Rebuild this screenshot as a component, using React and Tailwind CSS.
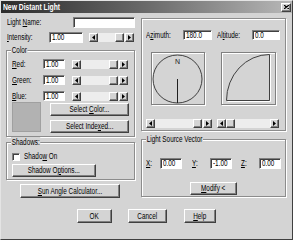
import React from 'react';

// narrow text: the dialog in the shot is squeezed sideways, so letters are tall and thin
const T = ({ children, center }) => (
    <span className={center ? 'inline-block whitespace-nowrap origin-center scale-x-[0.75]' : 'inline-block whitespace-nowrap origin-left scale-x-[0.75]'}>
        {children}
    </span>
);

const raised = 'bg-[#d4d4d4] border border-t-white border-l-white border-r-[#404040] border-b-[#404040] shadow-[inset_-1px_-1px_0_#808080]';

const Btn = ({ children, className = '' }) => (
    <div className={`flex items-center justify-center leading-none ${raised} ${className}`}>
        <T center>{children}</T>
    </div>
);

const Field = ({ value, className = '' }) => (
    <div className={`flex items-center leading-none pl-[2px] bg-white border border-t-[#808080] border-l-[#808080] border-r-white border-b-white shadow-[inset_1px_1px_0_#404040] ${className}`}>
        <T>{value}</T>
    </div>
);

const Arrow = ({ dir }) => (
    <div className={`w-[9px] h-full flex items-center justify-center ${raised}`}>
        <svg width="3" height="5" viewBox="0 0 3 5">
            <polygon points={dir === 'l' ? '3,0 0,2.5 3,5' : '0,0 3,2.5 0,5'} fill="#000" />
        </svg>
    </div>
);

const Slider = ({ className = '', thumb = 'end' }) => (
    <div className={`flex h-[9px] ${className}`}>
        <Arrow dir="l" />
        <div className="flex-1 flex bg-[#ededed]">
            {thumb === 'end' && <div className="flex-1" />}
            <div className={`w-[9px] h-full ${raised}`} />
            {thumb === 'start' && <div className="flex-1" />}
            {thumb === 'end' && <div className="w-[1px]" />}
        </div>
        <Arrow dir="r" />
    </div>
);

const Group = ({ label, className = '', children }) => (
    <div className={`relative border border-[#8c8c8c] shadow-[inset_1px_1px_0_#fff,1px_1px_0_#fff] ${className}`}>
        {label && (
            <div className="absolute -top-[6px] left-[4px] px-[1px] bg-[#d4d4d4] leading-[11px] whitespace-nowrap origin-left scale-x-[0.75]">
                {label}
            </div>
        )}
        {children}
    </div>
);

const ColorRow = ({ label, first }) => (
    <div className={`flex items-center h-[10px] pl-[5px] ${first ? '' : 'mt-[6px]'}`}>
        <div className="w-[31px] leading-none"><T>{label}</T></div>
        <Field value="1.00" className="w-[22px] h-[10px]" />
        <Slider className="ml-[7px] w-[56px]" />
    </div>
);

const Compass = () => (
    <div className="w-[54px] h-[53px] border border-[#808080] shadow-[1px_1px_0_#fff,inset_1px_1px_0_#fff]">
        <svg width="52" height="51" viewBox="0 0 52 51">
            <ellipse cx="25.5" cy="26" rx="24.5" ry="24" fill="none" stroke="#404040" strokeWidth="1" />
            <text x="25.5" y="11" textAnchor="middle" fontSize="7" fontFamily="Liberation Sans, Arial, sans-serif" fill="#202020">N</text>
            <line x1="25.5" y1="26" x2="25.5" y2="50" stroke="#202020" strokeWidth="1" />
        </svg>
    </div>
);

const AltitudeBox = () => (
    <div className="w-[55px] h-[53px] border border-[#808080] shadow-[1px_1px_0_#fff,inset_1px_1px_0_#fff]">
        <svg width="53" height="51" viewBox="0 0 53 51">
            <path d="M4.5 47.5 A43 46 0 0 1 47.5 1.5 L47.5 47.5 Z" fill="none" stroke="#404040" strokeWidth="1" />
            <path d="M5.5 48.5 L48.5 48.5 L48.5 2" fill="none" stroke="#ffffff" strokeWidth="1" />
        </svg>
    </div>
);

export default function App() {
    return (
        <div className="w-[293px] h-[240px] flex flex-col bg-[#d4d4d4] text-black text-[8.5px] font-['Liberation_Sans',Arial,sans-serif] border border-t-[#e4e4e4] border-l-[#e4e4e4] border-r-[#404040] border-b-[#404040] overflow-hidden">
            {/* title bar */}
            <div className="h-[12px] flex items-center bg-linear-to-r from-[#2c2c2c] via-[#6a6a6a] to-[#b8b8b8] pl-[2px] pr-[1px]">
                <div className="flex-1 text-white font-bold text-[9px] leading-none"><T>New Distant Light</T></div>
                <div className={`w-[10px] h-[9px] flex items-center justify-center ${raised}`}>
                    <svg width="5" height="4" viewBox="0 0 5 4">
                        <path d="M0 0 L5 4 M5 0 L0 4" stroke="#000" strokeWidth="1.2" />
                    </svg>
                </div>
            </div>

            <div className="flex pl-[5px]">
                {/* left column */}
                <div className="w-[129px] flex flex-col">
                    <div className="mt-[4px] h-[11px] flex items-center">
                        <div className="w-[68px] pl-[1px] leading-none"><T>Light <u>N</u>ame:</T></div>
                        <Field value="" className="w-[62px] h-[11px]" />
                    </div>
                    <div className="mt-[4px] h-[11px] flex items-center">
                        <div className="w-[43px] pl-[1px] leading-none"><T><u>I</u>ntensity:</T></div>
                        <Field value="1.00" className="w-[34px] h-[11px]" />
                        <Slider className="ml-[6px] w-[45px]" />
                    </div>

                    <Group label="Color" className="mt-[7px] h-[87px] pt-[8px]">
                        <ColorRow first label={<><u>R</u>ed:</>} />
                        <ColorRow label={<><u>G</u>reen:</>} />
                        <ColorRow label={<><u>B</u>lue:</>} />
                        <div className="flex mt-[1px] pl-[5px]">
                            <div className="w-[29px] h-[30px] bg-[#b2b2b2] border border-[#a0a0a0]" />
                            <div className="ml-[9px] w-[79px] flex flex-col">
                                <Btn className="mt-[1px] h-[13px]">Select <u>C</u>olor...</Btn>
                                <Btn className="mt-[4px] h-[13px]">Select Inde<u>x</u>ed...</Btn>
                            </div>
                        </div>
                    </Group>

                    <Group label="Shadows:" className="mt-[5px] h-[38px] pt-[9px]">
                        <div className="flex items-center h-[9px] pl-[5px]">
                            <div className="w-[8px] h-[8px] bg-white border border-t-[#808080] border-l-[#808080] border-r-white border-b-white shadow-[inset_1px_1px_0_#404040]" />
                            <div className="ml-[4px] leading-none"><T>Shado<u>w</u> On</T></div>
                        </div>
                        <div className="pl-[5px] mt-[3px]">
                            <Btn className="w-[84px] h-[13px]">Shadow O<u>p</u>tions...</Btn>
                        </div>
                    </Group>

                    <Btn className="mt-[4px] ml-[14px] w-[100px] h-[14px]"><u>S</u>un Angle Calculator...</Btn>
                </div>

                {/* right column */}
                <div className="ml-[6px] w-[145px] flex flex-col">
                    <Group className="mt-[5px] h-[113px] pt-[11px]">
                        <div className="flex items-center h-[10px] pl-[4px]">
                            <div className="w-[37px] leading-none"><T>A<u>z</u>imuth:</T></div>
                            <Field value="180.0" className="w-[29px] h-[10px]" />
                            <div className="ml-[5px] w-[35px] leading-none"><T>Al<u>t</u>itude:</T></div>
                            <Field value="0.0" className="w-[28px] h-[10px]" />
                        </div>
                        <div className="flex mt-[12px] pl-[9px]">
                            <Compass />
                            <div className="ml-[16px]"><AltitudeBox /></div>
                        </div>
                        <div className="flex mt-[14px] pl-[4px]">
                            <Slider className="w-[66px]" />
                            <Slider className="ml-[5px] w-[62px]" thumb="start" />
                        </div>
                    </Group>

                    <Group label="Light Source Vector" className="mt-[8px] h-[58px] pt-[18px]">
                        <div className="flex items-center h-[11px] pl-[4px]">
                            <div className="w-[14px] leading-none"><T><u>X</u>:</T></div>
                            <Field value="0.00" className="w-[22px] h-[11px]" />
                            <div className="ml-[10px] w-[18px] leading-none"><T><u>Y</u>:</T></div>
                            <Field value="-1.00" className="w-[22px] h-[11px]" />
                            <div className="ml-[9px] w-[18px] leading-none"><T><u>Z</u>:</T></div>
                            <Field value="0.00" className="w-[22px] h-[11px]" />
                        </div>
                        <Btn className="mt-[13px] ml-[48px] w-[47px] h-[13px]"><u>M</u>odify &lt;</Btn>
                    </Group>
                </div>
            </div>

            {/* dialog buttons */}
            <div className="flex mt-[11px] pl-[76px]">
                <Btn className="w-[35px] h-[14px]">OK</Btn>
                <Btn className="ml-[16px] w-[39px] h-[14px]">Cancel</Btn>
                <Btn className="ml-[17px] w-[32px] h-[14px]"><u>H</u>elp</Btn>
            </div>
        </div>
    );
}
